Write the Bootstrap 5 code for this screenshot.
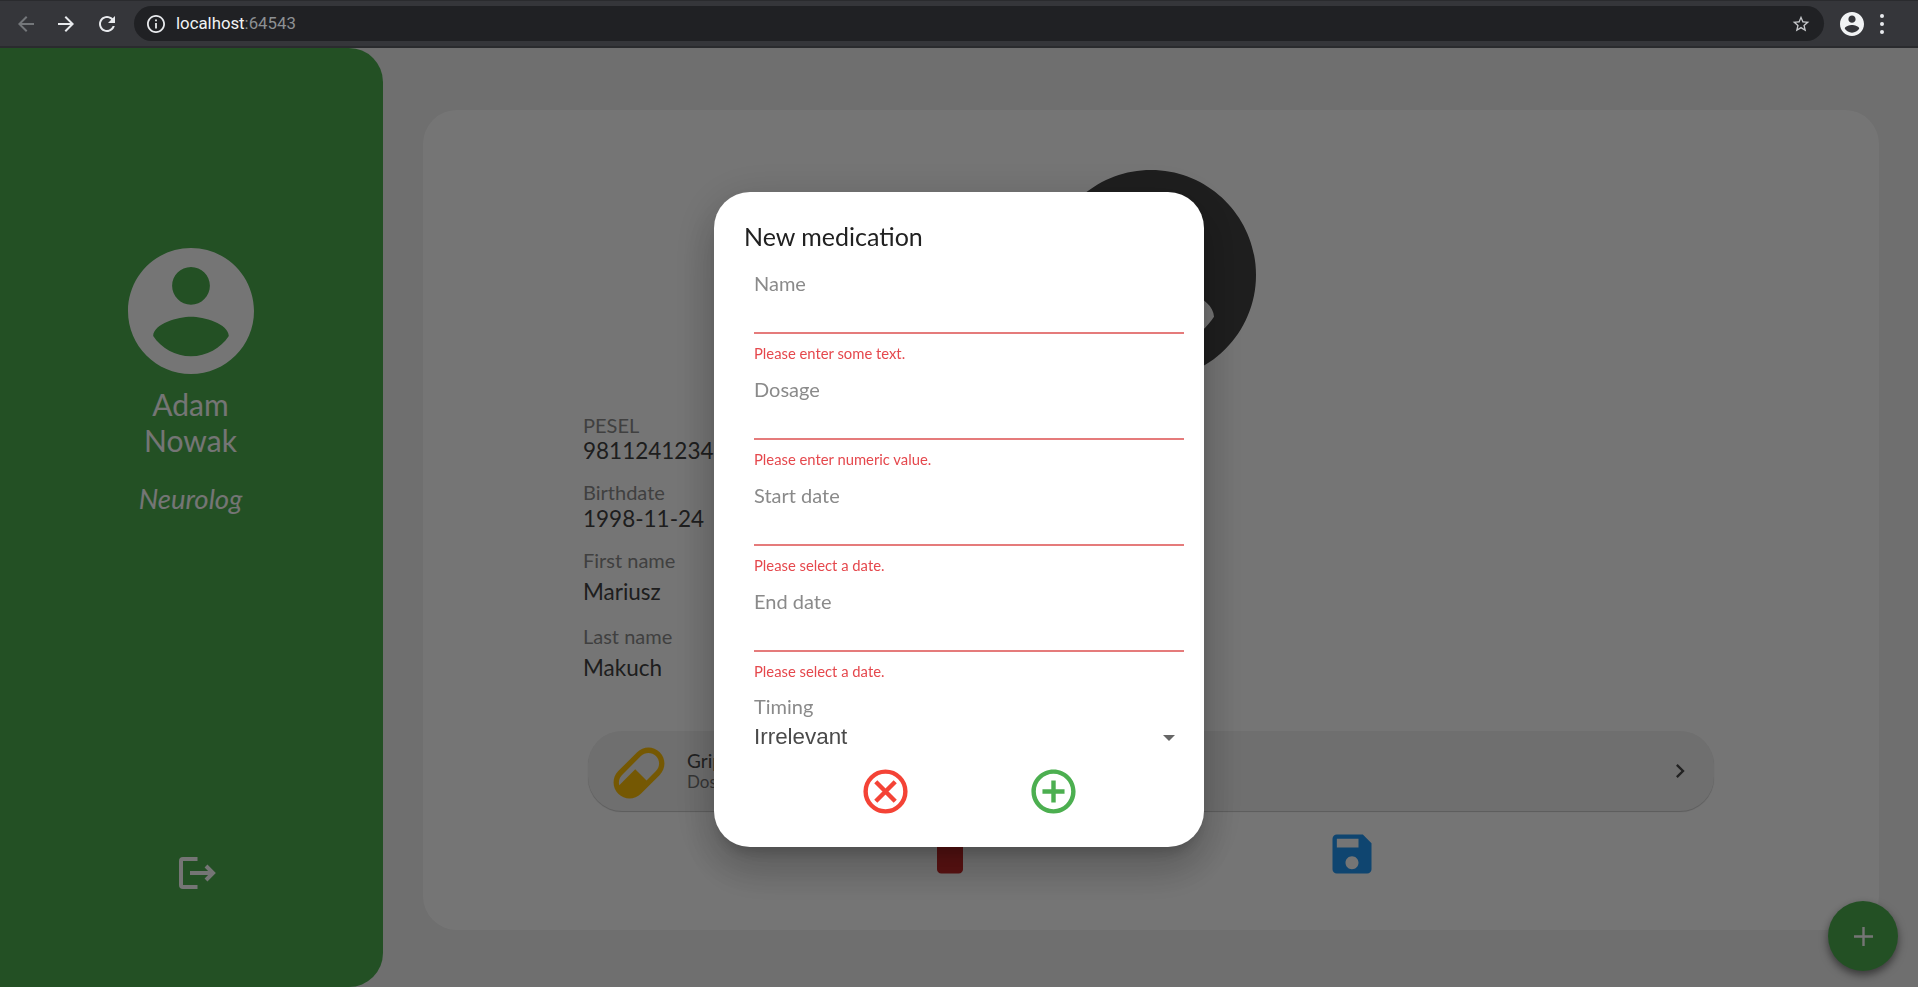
<!DOCTYPE html>
<html lang="en">
<head>
  <meta charset="UTF-8" />
  <meta name="viewport" content="width=device-width, initial-scale=1.0"/>
  <title>New medication</title>
  <link href="https://cdn.jsdelivr.net/npm/bootstrap@5.3.2/dist/css/bootstrap.min.css" rel="stylesheet"/>
  <style>
    html, body { height: 100%; overflow: hidden; }
    body { font-family: Lato, "Liberation Sans", sans-serif; background: #f1f1f1; color: #424242; }

    /* browser bar */
    .chrome-bar { height: 48px; background: #35363a; border-bottom: 2px solid #2a2b2e; border-top: 1px solid #2a2b2e; padding-left: 14px; }
    .chrome-btn { width: 24px; height: 24px; flex: none; }
    .chrome-back { margin-right: 16px; }
    .chrome-fwd { margin-right: 17px; }
    .omnibox { height: 35px; width: 1690px; margin-left: 15px; background: #202124; border-radius: 18px; padding: 0 13px 0 13px; }
    .omni-host { font-family: Roboto, sans-serif; font-size: 16.8px; color: #f1f3f4; margin-left: 11px; }
    .omni-port { color: #8d9093; }
    .chrome-acct { margin-left: 16px; }
    .chrome-menu { margin-left: 16px; }

    /* page behind the dialog */
    .page-main { height: 939px; }
    .side-panel { width: 383px; flex: none; background: #4caf50; color: #fff; border-radius: 0 34px 34px 0; padding-top: 200px; padding-right: 2px; }
    .side-name { font-size: 30px; line-height: 36px; margin-top: 12px; }
    .side-role { font-size: 27.5px; line-height: 32px; font-style: italic; margin-top: 25px; }
    .side-logout { margin-top: auto; margin-bottom: 98px; margin-left: 14px; }
    .content-area { padding: 62px 39px 57px 40px; }
    .info-card { background: #fff; border-radius: 34px; padding-top: 60px; }
    .big-avatar { width: 210px; height: 210px; }
    .info-block { margin-left: 160px; margin-top: 33px; }
    .info-label { font-size: 20px; line-height: 24px; color: #8b8b8b; }
    .info-value { font-size: 22.5px; line-height: 26px; color: #424242; margin-top: 1px; }
    .info-value-b { margin-top: 2px; }
    .info-gap-a { margin-top: 16px; }
    .info-gap-b { margin-top: 16px; }
    .info-gap-c { margin-top: 18px; }
    .info-value-wide { line-height: 28px; margin-top: 6px; }
    .med-row { height: 80px; margin: 49px 165px 0; background: #f1f1f1; border-radius: 34px; box-shadow: 0 1px 1px rgba(0,0,0,.22); padding: 0 20px 0 19px; }
    .med-pill { margin-top: 4px; }
    .med-name { font-size: 19px; line-height: 22px; color: #4a4a4a; }
    .med-dose { font-size: 17px; line-height: 20px; color: #757575; }
    .med-actions { margin-top: 17px; gap: 350px; }

    .fab-add { right: 20px; bottom: 16px; width: 70px; height: 70px; background: #4caf50; box-shadow: 0 4px 8px rgba(0,0,0,.5); }

    /* dialog */
    .dialog-scrim { top: 48px; left: 0; right: 0; bottom: 0; background: rgba(0,0,0,.54); z-index: 20; padding-top: 4px; }
    .dialog-box { width: 490px; background: #fff; border-radius: 36px; padding: 30px 20px 29px 30px;
      box-shadow: 0 11px 15px -7px rgba(0,0,0,.2), 0 24px 38px 3px rgba(0,0,0,.14), 0 9px 46px 8px rgba(0,0,0,.12); }
    .dialog-title { font-size: 25px; line-height: 28px; font-weight: 400; color: #212121; margin-bottom: 21px; }
    .dialog-fields { margin-left: 10px; }
    .field-block { margin-bottom: 14px; }
    .field-block-last { margin-bottom: 13px; }
    .field-label { font-size: 20px; line-height: 24px; color: #8a8a8a; margin: 0; display: block; }
    .field-input { height: 39px; border: 0; border-bottom: 2px solid #e57b7b; border-radius: 0; padding: 0; background: transparent; box-shadow: none; }
    .field-error { font-size: 14.8px; line-height: 20px; color: #e5484d; margin-top: 9px; }
    .timing-value { font-family: "Liberation Sans", sans-serif; font-size: 22.4px; line-height: 28px; color: #4a4a4a; margin-top: 5px; }
    .timing-caret { width: 0; height: 0; border-left: 6px solid transparent; border-right: 6px solid transparent; border-top: 6px solid #666; margin-right: 9px; margin-top: 2px; }
    .dialog-actions { gap: 115px; margin-top: 14px; }
  </style>
</head>
<body>
  <div class="chrome-bar d-flex align-items-center">
    <svg class="chrome-btn chrome-back" viewBox="0 0 24 24" fill="#74777a"><path d="M20 11H7.83l5.59-5.59L12 4l-8 8 8 8 1.41-1.41L7.83 13H20v-2z"/></svg>
    <svg class="chrome-btn chrome-fwd" viewBox="0 0 24 24" fill="#e8eaed"><path d="M12 4l-1.41 1.41L16.17 11H4v2h12.17l-5.58 5.59L12 20l8-8z"/></svg>
    <svg class="chrome-btn" viewBox="0 0 24 24" fill="#e8eaed"><path d="M17.65 6.35C16.2 4.9 14.21 4 12 4c-4.42 0-7.99 3.58-7.99 8s3.57 8 7.99 8c3.73 0 6.84-2.55 7.73-6h-2.08c-.82 2.33-3.04 4-5.65 4-3.31 0-6-2.69-6-6s2.69-6 6-6c1.66 0 3.14.69 4.22 1.78L13 11h7V4l-2.35 2.35z"/></svg>
    <div class="omnibox d-flex align-items-center">
      <svg width="18" height="18" viewBox="2 2 20 20" fill="#e8eaed"><path d="M11 7h2v2h-2zm0 4h2v6h-2zm1-9C6.48 2 2 6.48 2 12s4.48 10 10 10 10-4.48 10-10S17.52 2 12 2zm0 18c-4.41 0-8-3.59-8-8s3.59-8 8-8 8 3.59 8 8-3.59 8-8 8z"/></svg>
      <span class="omni-host">localhost<span class="omni-port">:64543</span></span>
      <svg class="ms-auto" width="20" height="20" viewBox="0 0 24 24" fill="#c4c6c9"><path d="M22 9.24l-7.19-.62L12 2 9.19 8.63 2 9.24l5.46 4.73L5.82 21 12 17.27 18.18 21l-1.63-7.03L22 9.24zM12 15.4l-3.76 2.27 1-4.28-3.32-2.88 4.38-.38L12 6.1l1.71 4.04 4.38.38-3.32 2.88 1 4.28L12 15.4z"/></svg>
    </div>
    <svg class="chrome-acct" width="24" height="24" viewBox="2 2 20 20" fill="#f1f3f4"><path d="M12 2C6.48 2 2 6.48 2 12s4.48 10 10 10 10-4.48 10-10S17.52 2 12 2zm0 3c1.66 0 3 1.34 3 3s-1.34 3-3 3-3-1.34-3-3 1.34-3 3-3zm0 14.2c-2.5 0-4.71-1.28-6-3.22.03-1.99 4-3.08 6-3.08 1.99 0 5.97 1.09 6 3.08-1.29 1.94-3.5 3.22-6 3.22z"/></svg>
    <svg class="chrome-menu" width="4" height="20" viewBox="0 0 4 20" fill="#e8eaed"><circle cx="2" cy="2" r="2"/><circle cx="2" cy="10" r="2"/><circle cx="2" cy="18" r="2"/></svg>
  </div>

  <div class="page-main d-flex">
    <aside class="side-panel d-flex flex-column align-items-center text-center">
      <svg width="126" height="126" viewBox="2 2 20 20" fill="#fff"><path d="M12 2C6.48 2 2 6.48 2 12s4.48 10 10 10 10-4.48 10-10S17.52 2 12 2zm0 3c1.66 0 3 1.34 3 3s-1.34 3-3 3-3-1.34-3-3 1.34-3 3-3zm0 14.2c-2.5 0-4.71-1.28-6-3.22.03-1.99 4-3.08 6-3.08 1.99 0 5.97 1.09 6 3.08-1.29 1.94-3.5 3.22-6 3.22z"/></svg>
      <div class="side-name">Adam<br>Nowak</div>
      <div class="side-role">Neurolog</div>
      <svg class="side-logout" width="37" height="32" viewBox="0 0 37 32" fill="none" stroke="#fff" stroke-width="4"><path d="M18.5 2H4a2 2 0 0 0-2 2v24a2 2 0 0 0 2 2h14.500"/><path d="M11 16h23"/><path d="M27 9l7 7-7 7"/></svg>
    </aside>

    <main class="content-area flex-grow-1">
      <div class="info-card h-100">
        <div class="text-center">
          <svg class="big-avatar d-block mx-auto" viewBox="2 2 20 20" fill="#424242"><path d="M12 2C6.48 2 2 6.48 2 12s4.48 10 10 10 10-4.48 10-10S17.52 2 12 2zm0 3c1.66 0 3 1.34 3 3s-1.34 3-3 3-3-1.34-3-3 1.34-3 3-3zm0 14.2c-2.5 0-4.71-1.28-6-3.22.03-1.99 4-3.08 6-3.08 1.99 0 5.97 1.09 6 3.08-1.29 1.94-3.5 3.22-6 3.22z"/></svg>
        </div>
        <div class="info-block">
          <div class="info-label">PESEL</div>
          <div class="info-value">98112412345</div>
          <div class="info-label info-gap-a">Birthdate</div>
          <div class="info-value info-value-b">1998-11-24</div>
          <div class="info-label info-gap-b">First name</div>
          <div class="info-value info-value-wide">Mariusz</div>
          <div class="info-label info-gap-c">Last name</div>
          <div class="info-value info-value-wide">Makuch</div>
        </div>
        <div class="med-row d-flex align-items-center">
          <svg class="med-pill" width="64" height="64" viewBox="0 0 24 24" fill="#ffc107"><path d="M4.22 11.29L11.29 4.22C13.64 1.88 17.43 1.88 19.78 4.22C22.12 6.57 22.12 10.36 19.78 12.71L12.71 19.78C10.36 22.12 6.57 22.12 4.22 19.78C1.88 17.43 1.88 13.64 4.22 11.29M5.64 12.71C4.59 13.75 4.24 15.24 4.6 16.57L10.59 10.59L14.83 14.83L18.36 11.29C19.93 9.73 19.93 7.2 18.36 5.64C16.8 4.07 14.27 4.07 12.71 5.64L5.64 12.71Z"/></svg>
          <div class="ms-3">
            <div class="med-name">Gripex</div>
            <div class="med-dose">Dosage: 1</div>
          </div>
          <svg class="ms-auto" width="28" height="28" viewBox="0 0 24 24" fill="#4a4a4a"><path d="M10 6L8.59 7.41 13.17 12l-4.58 4.59L10 18l6-6z"/></svg>
        </div>
        <div class="med-actions d-flex justify-content-center">
          <svg width="52" height="52" viewBox="0 0 24 24" fill="#c62828"><path d="M6 19c0 1.1.9 2 2 2h8c1.1 0 2-.9 2-2V7H6v12zM19 4h-3.5l-1-1h-5l-1 1H5v2h14V4z"/></svg>
          <svg width="52" height="52" viewBox="0 0 24 24" fill="#2196f3"><path d="M17 3H5c-1.11 0-2 .9-2 2v14c0 1.1.89 2 2 2h14c1.1 0 2-.9 2-2V7l-4-4zm-5 16c-1.66 0-3-1.34-3-3s1.34-3 3-3 3 1.34 3 3-1.34 3-3 3zm3-10H5V5h10v4z"/></svg>
        </div>
      </div>
    </main>
  </div>

  <div class="fab-add position-fixed rounded-circle d-flex align-items-center justify-content-center">
    <svg width="19" height="19" viewBox="0 0 19 19" stroke="#fff" stroke-width="2.4"><path d="M9.5 0v19M0 9.5h19"/></svg>
  </div>

  <div class="dialog-scrim position-fixed d-flex justify-content-center align-items-center">
    <div class="dialog-box">
      <h5 class="dialog-title">New medication</h5>
      <form class="dialog-fields">
        <div class="field-block">
          <label class="field-label" for="med-name">Name</label>
          <input class="form-control field-input" id="med-name" type="text">
          <div class="field-error">Please enter some text.</div>
        </div>
        <div class="field-block">
          <label class="field-label" for="med-dose">Dosage</label>
          <input class="form-control field-input" id="med-dose" type="text">
          <div class="field-error">Please enter numeric value.</div>
        </div>
        <div class="field-block">
          <label class="field-label" for="med-start">Start date</label>
          <input class="form-control field-input" id="med-start" type="text">
          <div class="field-error">Please select a date.</div>
        </div>
        <div class="field-block-last">
          <label class="field-label" for="med-end">End date</label>
          <input class="form-control field-input" id="med-end" type="text">
          <div class="field-error">Please select a date.</div>
        </div>
        <div class="field-label">Timing</div>
        <div class="timing-value d-flex justify-content-between align-items-center">
          <span>Irrelevant</span>
          <span class="timing-caret"></span>
        </div>
        <div class="dialog-actions d-flex justify-content-center">
          <svg width="53" height="53" viewBox="0 0 24 24" fill="none" stroke="#f44336" stroke-width="2"><circle cx="12" cy="12" r="9"/><path d="M7.600 7.600l8.800 8.800M16.400 7.600l-8.800 8.800"/></svg>
          <svg width="53" height="53" viewBox="0 0 24 24" fill="#4caf50"><path d="M13 7h-2v4H7v2h4v4h2v-4h4v-2h-4V7zm-1-5C6.48 2 2 6.48 2 12s4.48 10 10 10 10-4.48 10-10S17.52 2 12 2zm0 18c-4.41 0-8-3.59-8-8s3.59-8 8-8 8 3.59 8 8-3.59 8-8 8z"/></svg>
        </div>
      </form>
    </div>
  </div>

  <script src="https://cdn.jsdelivr.net/npm/bootstrap@5.3.2/dist/js/bootstrap.bundle.min.js"></script>
</body>
</html>
